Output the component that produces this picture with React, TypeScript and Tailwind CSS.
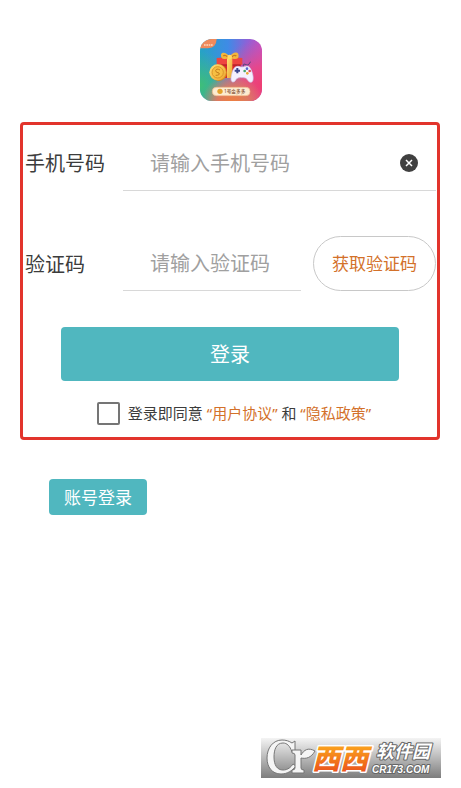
import React, { useState } from "react";

function AppIcon() {
    return (
        <svg viewBox="0 0 186 186" className="w-[62px] h-[62px]" role="img" aria-label="App icon">
            <defs>
                <clipPath id="iconShape"><rect width="186" height="186" rx="36" /></clipPath>
                <linearGradient id="iconBase" x1="0" y1="0" x2="1" y2="0">
                    <stop offset="0" stopColor="#26a3c4" />
                    <stop offset="0.45" stopColor="#3f8be6" />
                    <stop offset="0.75" stopColor="#8a63d8" />
                    <stop offset="1" stopColor="#c44fc4" />
                </linearGradient>
                <radialGradient id="iconGreen" cx="0" cy="0.75" r="0.55">
                    <stop offset="0" stopColor="#3fbe78" />
                    <stop offset="1" stopColor="#3fbe78" stopOpacity="0" />
                </radialGradient>
                <radialGradient id="iconPink" cx="1" cy="0.75" r="0.75">
                    <stop offset="0" stopColor="#ee3f72" />
                    <stop offset="0.4" stopColor="#e5478c" />
                    <stop offset="1" stopColor="#d8509c" stopOpacity="0" />
                </radialGradient>
                <radialGradient id="iconOrange" cx="0.52" cy="1.05" r="0.5">
                    <stop offset="0" stopColor="#f0803c" />
                    <stop offset="0.5" stopColor="#dd7a60" />
                    <stop offset="1" stopColor="#d88858" stopOpacity="0" />
                </radialGradient>
                <linearGradient id="gold" x1="0" y1="0" x2="1" y2="1">
                    <stop offset="0" stopColor="#ffe27a" />
                    <stop offset="1" stopColor="#eda32c" />
                </linearGradient>
            </defs>
            <g clipPath="url(#iconShape)">
                <rect width="186" height="186" fill="url(#iconBase)" />
                <rect width="186" height="186" fill="url(#iconGreen)" />
                <rect width="186" height="186" fill="url(#iconPink)" />
                <rect width="186" height="186" fill="url(#iconOrange)" />
                <path d="M0 0H50Q49 26 24 28H0Z" fill="#f08a5c" />
                <path d="M12 18H38" stroke="#ffd9bd" strokeWidth="4" strokeDasharray="5 2" />
            </g>
            {/* gift box */}
            <path d="M54 70H122V117H54Z" fill="#d8262e" />
            <path d="M50 57L88 54L127 57V77H50Z" fill="#ee4540" />
            <path d="M54 78H122" stroke="#a91d29" strokeWidth="3" />
            <path d="M81 55H97V117H81Z" fill="url(#gold)" />
            <path d="M89 56C71 64 61 61 63 46C66 36 83 42 89 53C95 42 110 36 115 45C119 61 108 63 89 56Z" fill="#f4b73c" />
            <path d="M70 51Q75 46 83 54M95 54Q103 46 109 51" stroke="#c77a20" strokeWidth="4" fill="none" />
            <circle cx="89" cy="54" r="7" fill="#ffd76a" />
            {/* coin */}
            <ellipse cx="56" cy="101" rx="25" ry="25" fill="#d88a1d" />
            <ellipse cx="53" cy="100" rx="25" ry="24" fill="url(#gold)" />
            <ellipse cx="53" cy="100" rx="17" ry="17" fill="#f6bf43" stroke="#dc9628" strokeWidth="3" />
            <path d="M60 93Q49 87 47 95Q47 101 57 102Q61 109 47 109" fill="none" stroke="#c47d1c" strokeWidth="3" />
            {/* controller */}
            <path d="M131 85C127 70 136 77 142 78C149 78 147 70 152 69" stroke="#484078" strokeWidth="3" fill="none" />
            <path d="M106 84C113 79 119 84 126 84C133 84 138 79 145 82C151 85 155 94 158 106C161 118 160 129 153 130C145 131 143 119 136 117C127 115 117 115 110 119C106 123 105 130 98 129C91 127 93 115 95 106C97 97 100 88 106 84Z" fill="#f4f0ff" stroke="#cfc3e8" strokeWidth="2" />
            <path d="M104 95H120M112 87V103" stroke="#39448e" strokeWidth="6" />
            <circle cx="141" cy="89" r="4" fill="#5369cf" />
            <circle cx="149" cy="96" r="4" fill="#e24d56" />
            <circle cx="134" cy="96" r="4" fill="#47a26b" />
            <circle cx="142" cy="103" r="4" fill="#e8a735" />
            {/* caption */}
            <rect x="37" y="145" width="113" height="25" rx="12" fill="#fdebd0" stroke="#f0b98a" strokeWidth="2" />
            <circle cx="60" cy="157" r="8" fill="#e4a22b" />
            <text x="72" y="162" fontSize="14" fontWeight="500" fill="#8a5a40" fontFamily="'Noto Sans', 'Noto Sans CJK SC', sans-serif">1号金多多</text>
        </svg>
    );
}

function SiteLogo() {
    return (
        <svg viewBox="0 0 180 40" className="w-[180px] h-10 overflow-visible" role="img" aria-label="西西软件园 CR173.COM">
            <defs>
                <linearGradient id="bar" x1="0" y1="0" x2="0" y2="1">
                    <stop offset="0" stopColor="#f4f4f4" />
                    <stop offset="1" stopColor="#7d7d7d" />
                </linearGradient>
                <linearGradient id="flame" x1="0" y1="0" x2="0" y2="1">
                    <stop offset="0.2" stopColor="#fba51c" />
                    <stop offset="1" stopColor="#e8451c" />
                </linearGradient>
            </defs>
            <rect width="180" height="40" fill="url(#bar)" />
            {/* emblem with a leaf on its right side */}
            <g stroke="#777" strokeWidth="1" fill="#f5f5f5" strokeLinejoin="round">
                <path d="M34 3V14H31C29 8 26 5 22 5C15 5 13 12 13 19C13 27 16 32 22 32C27 32 30 29 32 26L35 28C31 33 26 36 20 36C11 36 6 29 6 20C6 10 12 2 21 2C25 2 28 3 31 5Z" />
                <path d="M31 12H40V17C43 12 47 9 54 13C50 20 45 21 40 20V30Q40 32 43 32V35H31V32Q34 32 34 30V17Q34 15 31 15Z" />
            </g>
            <g fontStyle="italic" fontWeight="900" strokeLinejoin="round" paintOrder="stroke">
                <text x="51" y="31" fontSize="28" fill="url(#flame)" stroke="#fff" strokeWidth="3" fontFamily="'Noto Sans CJK SC', sans-serif">西西</text>
                <text x="115" y="20" fontSize="18" fontWeight="700" fill="#fff" stroke="#666" strokeWidth="2" fontFamily="'Noto Sans CJK SC', sans-serif">软件园</text>
                <text x="111" y="35" fontSize="10" fontWeight="700" fill="#fff" stroke="#666" strokeWidth="2" fontFamily="'Liberation Sans', sans-serif">CR173.COM</text>
            </g>
        </svg>
    );
}

export default function App() {
    const [phone, setPhone] = useState("");
    const [code, setCode] = useState("");
    const [agreed, setAgreed] = useState(false);

    const handleSubmit = (e: React.FormEvent) => {
        e.preventDefault();
    };

    return (
        <main className="min-h-screen flex flex-col bg-white text-[#3c3c3c] font-['Noto_Sans','Noto_Sans_CJK_SC',sans-serif]">
            <header className="flex justify-center pt-[39px]">
                <AppIcon />
            </header>

            <form onSubmit={handleSubmit} className="mt-[21px] ml-5 mr-[21px] border-3 border-[#e2342c] rounded-sm pt-[11px] pb-3">
                <div className="flex items-center pl-0.5 pr-px">
                    <label htmlFor="phone" className="w-[98px] shrink-0 text-xl">手机号码</label>
                    <div className="flex flex-1 min-w-0 items-center border-b border-[#d8d8d8] pr-[18px]">
                        <input
                            id="phone"
                            type="tel"
                            value={phone}
                            onChange={e => setPhone(e.target.value)}
                            placeholder="请输入手机号码"
                            className="flex-1 min-w-0 h-[54px] pl-[27px] text-xl outline-none placeholder:text-[#a0a0a0]"
                        />
                        <button type="button" aria-label="清除" onClick={() => setPhone("")}>
                            <svg viewBox="0 0 18 18" className="block w-[18px] h-[18px]">
                                <circle cx="9" cy="9" r="9" fill="#404040" />
                                <path d="M6 6L12 12M12 6L6 12" stroke="#fff" strokeWidth="1.5" />
                            </svg>
                        </button>
                    </div>
                </div>

                <div className="flex items-center mt-[45px] pl-0.5 pr-px">
                    <label htmlFor="code" className="w-[98px] shrink-0 pt-0.5 text-xl">验证码</label>
                    <div className="flex flex-1 min-w-0 border-b border-[#d8d8d8]">
                        <input
                            id="code"
                            type="text"
                            value={code}
                            onChange={e => setCode(e.target.value)}
                            placeholder="请输入验证码"
                            className="flex-1 min-w-0 h-[54px] pl-[27px] text-xl outline-none placeholder:text-[#a0a0a0]"
                        />
                    </div>
                    <button
                        type="button"
                        className="ml-3 w-[123px] h-[55px] shrink-0 border border-[#c8c8c8] rounded-full text-[17px] text-[#d3712a]"
                    >
                        获取验证码
                    </button>
                </div>

                <div className="mt-9 mx-[38px]">
                    <button type="submit" className="w-full h-[54px] rounded bg-[#50b7bf] pt-0.5 text-xl text-white">
                        登录
                    </button>
                </div>

                <div className="flex items-center justify-center gap-2 mt-[21px] pl-2 text-[15px]">
                    <input
                        id="agree"
                        type="checkbox"
                        checked={agreed}
                        onChange={e => setAgreed(e.target.checked)}
                        className="appearance-none w-[23px] h-[23px] shrink-0 border-[2px] border-[#757575] rounded-xs checked:bg-[#50b7bf]"
                    />
                    <p className="whitespace-nowrap">
                        <label htmlFor="agree">登录即同意</label>{" "}
                        <a href="#terms" className="text-[#d3712a]">“用户协议”</a> 和{" "}
                        <a href="#privacy" className="text-[#d3712a]">“隐私政策”</a>
                    </p>
                </div>
            </form>

            <div className="mt-[39px] ml-[49px]">
                <button type="button" className="h-9 px-[15px] rounded-sm bg-[#50b7bf] pt-0.5 text-[17px] text-white">
                    账号登录
                </button>
            </div>

            <footer className="mt-auto flex justify-end pr-5 pb-2.5">
                <SiteLogo />
            </footer>
        </main>
    );
}
